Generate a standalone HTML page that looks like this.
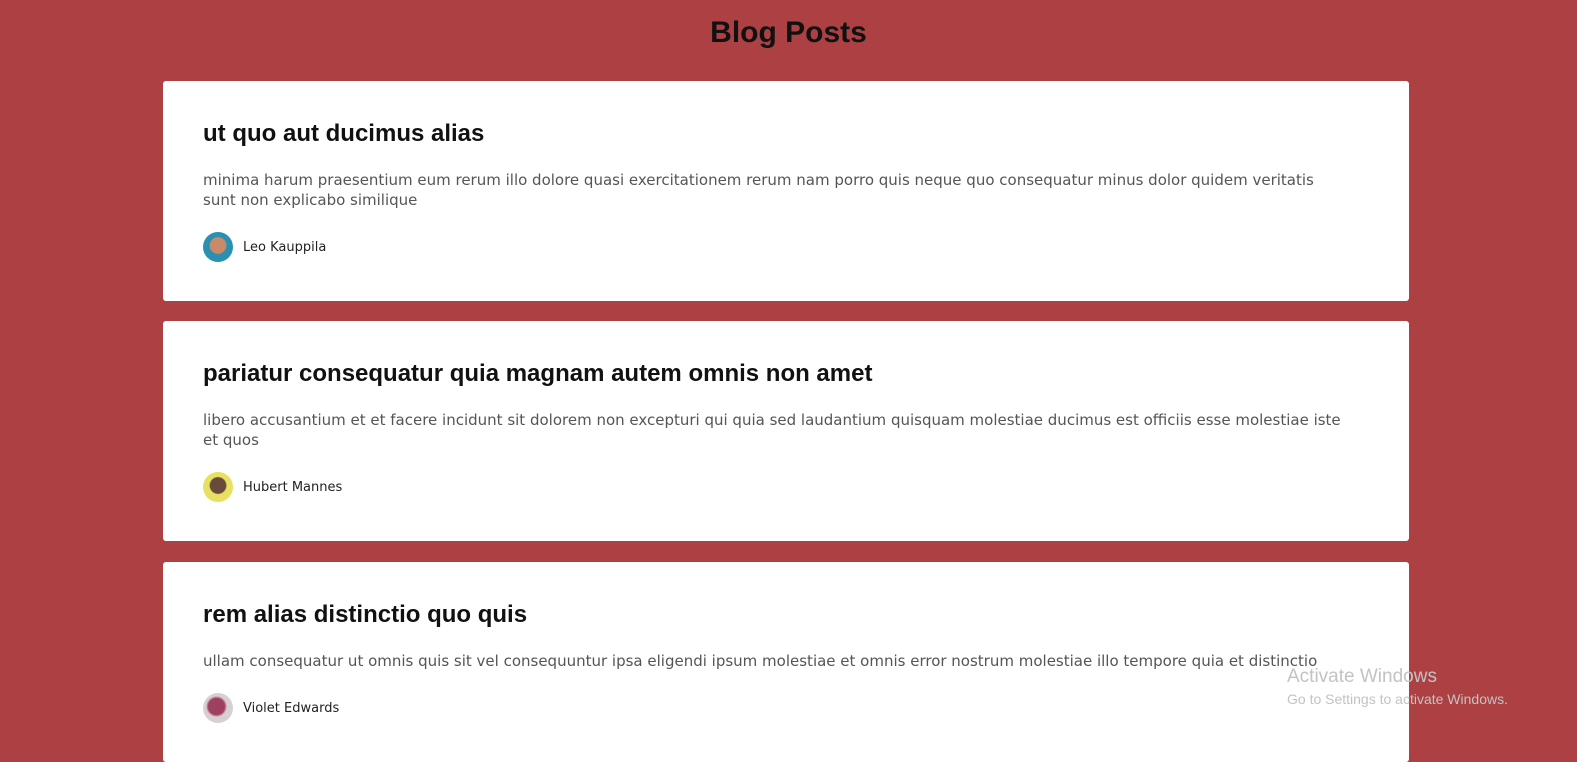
<!DOCTYPE html>
<html><head><meta charset="utf-8"><style>
body{margin:0;background:#ad4042;font-family:"DejaVu Sans","Liberation Sans",sans-serif;width:1577px;height:751px;overflow:hidden;position:relative}
h1{margin:0;position:absolute;top:16px;left:0;width:1577px;text-align:center;font-size:30px;font-weight:bold;color:#111;font-family:"Liberation Sans",sans-serif}
.card{position:absolute;left:163px;width:1246px;height:220px;background:#fff;border-radius:3px;box-sizing:border-box;padding:0 40px}
.card h2{position:absolute;left:40px;top:39px;margin:0;font-size:24px;font-weight:bold;color:#111;font-family:"Liberation Sans",sans-serif}
.card p{position:absolute;left:40px;right:70px;top:89px;margin:0;font-size:15px;line-height:20px;color:#555;letter-spacing:0}
.au{position:absolute;left:40px;top:151px;display:flex;align-items:center;font-size:13px;color:#222}
.av{width:30px;height:30px;border-radius:50%;margin-right:10px}
.wm{position:absolute;left:1287px;top:666px;color:#c3c3c3;font-family:"Liberation Sans",sans-serif}
</style></head><body>
<h1>Blog Posts</h1>
<div class="card" style="top:81px"><h2>ut quo aut ducimus alias</h2><p>minima harum praesentium eum rerum illo dolore quasi exercitationem rerum nam porro quis neque quo consequatur minus dolor quidem veritatis sunt non explicabo similique</p><div class="au"><div class="av" style="background:radial-gradient(circle at 50% 45%,#c98a6a 35%,#2a8fb0 40%)"></div>Leo Kauppila</div></div>
<div class="card" style="top:321px"><h2>pariatur consequatur quia magnam autem omnis non amet</h2><p style="right:55px">libero accusantium et et facere incidunt sit dolorem non excepturi qui quia sed laudantium quisquam molestiae ducimus est officiis esse molestiae iste et quos</p><div class="au"><div class="av" style="background:radial-gradient(circle at 50% 45%,#6a4a3a 35%,#e8e060 40%)"></div>Hubert Mannes</div></div>
<div class="card" style="top:562px;height:200px"><h2>rem alias distinctio quo quis</h2><p style="right:20px">ullam consequatur ut omnis quis sit vel consequuntur ipsa eligendi ipsum molestiae et omnis error nostrum molestiae illo tempore quia et distinctio</p><div class="au" style="top:131px"><div class="av" style="background:radial-gradient(circle at 45% 45%,#a04060 35%,#d8d0d0 45%)"></div>Violet Edwards</div></div>
<div class="wm"><div style="font-size:19px">Activate Windows</div><div style="font-size:14px;margin-top:3px">Go to Settings to activate Windows.</div></div>
</body></html>
